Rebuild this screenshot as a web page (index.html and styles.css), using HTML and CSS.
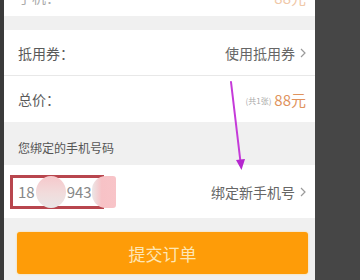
FILE: index.html
```html
<!DOCTYPE html>
<html lang="zh">
<head>
<meta charset="utf-8">
<link rel="stylesheet" href="styles.css">
</head>
<body>
<div class="page">
  <div class="row top-row"><span class="label">手机：</span><span class="price">88元</span></div>
  <div class="gap"></div>
  <div class="row divided">
    <span class="label">抵用券：</span>
    <span class="right">使用抵用券<svg class="chev" width="6" height="10" viewBox="0 0 6 10"><path d="M1 1 L5 5 L1 9" fill="none" stroke="#9a9a9a" stroke-width="1.2"/></svg></span>
  </div>
  <div class="row">
    <span class="label">总价：</span>
    <span class="right"><span class="count">(共1张)</span><span class="price">88元</span></span>
  </div>
  <div class="section-title">您绑定的手机号码</div>
  <div class="row phone-row">
    <span class="phone">18<span class="hide"></span>943<span class="hide2"></span></span>
    <span class="right">绑定新手机号<svg class="chev" width="6" height="10" viewBox="0 0 6 10"><path d="M1 1 L5 5 L1 9" fill="none" stroke="#9a9a9a" stroke-width="1.2"/></svg></span>
    <span class="redbox"></span>
  </div>
  <div class="btn-wrap"><div class="submit">提交订单</div></div>
</div>
<svg class="arrow" width="360" height="280" viewBox="0 0 360 280">
  <line x1="231" y1="82" x2="240.5" y2="162" stroke="#c53ad9" stroke-width="2" stroke-linecap="round"/>
  <polygon points="236,160 245,159 241.5,170" fill="#b526cf"/>
</svg>
</body>
</html>
```
FILE: styles.css
```css
* { box-sizing: border-box; }
html, body { margin: 0; padding: 0; }
body {
  background: #464646;
  width: 360px;
  height: 280px;
  overflow: hidden;
  position: relative;
  font-family: "Noto Sans CJK SC", "Noto Sans", sans-serif;
  border-left: 4px solid #3a3a3a;
}
.page {
  width: 311px;
  height: 280px;
  background: #f0f0f0;
  overflow: hidden;
}
.row {
  display: flex;
  align-items: center;
  justify-content: space-between;
  background: #fff;
  padding: 0 9px 0 14px;
  height: 46px;
  font-size: 14px;
  position: relative;
}
.top-row { height: 38px; margin-top: -22px; }
.top-row .label { color: #aaa; }
.top-row .price { color: #f0c8a8; }
.gap { height: 14px; }
.divided { height: 46px; border-bottom: 1px solid #e8e8e8; }
.label { color: #5a5a5a; }
.right { color: #666; display: flex; align-items: center; }
.chev { margin-left: 5px; }
.count { font-size: 8px; color: #aaa; margin-right: 3px; margin-top: 2px; }
.price { color: #e0935d; font-size: 15px; }
.section-title {
  height: 43px;
  padding: 19px 0 0 14px;
  font-size: 12px;
  line-height: 14px;
  color: #555;
}
.phone-row { height: 53px; }
.phone { color: #888; font-size: 15px; display: flex; align-items: center; position: relative; z-index: 1; }
.hide {
  display: inline-block;
  width: 30px;
  height: 32px;
  border-radius: 50%;
  margin: 0 1px;
  background: linear-gradient(#f6c8cb 0%, #f1dcdc 55%, #e9e6e6 100%);
}
.hide2 {
  display: inline-block;
  width: 24px;
  height: 32px;
  border-radius: 14px 3px 3px 14px;
  background: linear-gradient(90deg, #ece6e6 0%, #f7c2c6 40%, #f8c4c8 100%);
}
.redbox {
  position: absolute;
  left: 6px;
  top: 10px;
  width: 94px;
  height: 34px;
  border: 3px solid #b8464e;
}
.btn-wrap { padding: 14px 7px 0 13px; }
.submit {
  height: 42px;
  background: #fe9c08;
  border-radius: 3px;
  color: #fde6b5;
  font-size: 17px;
  display: flex;
  align-items: center;
  justify-content: center;
  box-shadow: 0 0 2px #ffd27a;
}
.arrow { position: absolute; left: -4px; top: 0; pointer-events: none; }
```
